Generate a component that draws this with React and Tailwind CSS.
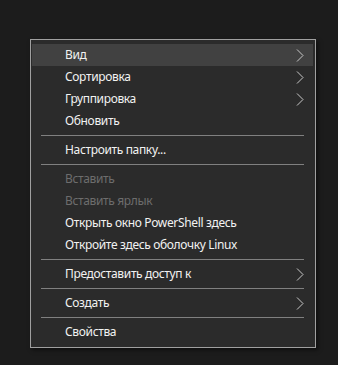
import React from 'react';

const items = [
    { label: 'Вид', sub: true, hover: true },
    { label: 'Сортировка', sub: true },
    { label: 'Группировка', sub: true },
    { label: 'Обновить' },
    'sep',
    { label: 'Настроить папку...' },
    'sep',
    { label: 'Вставить', disabled: true },
    { label: 'Вставить ярлык', disabled: true },
    { label: 'Открыть окно PowerShell здесь' },
    { label: 'Откройте здесь оболочку Linux' },
    'sep',
    { label: 'Предоставить доступ к', sub: true },
    'sep',
    { label: 'Создать', sub: true },
    'sep',
    { label: 'Свойства' },
];

const Chevron = () => (
    <svg width="8" height="13" viewBox="0 0 8 13" className="text-[#c8c8c8]">
        <path d="M1 0.5 L7 6.5 L1 12.5" fill="none" stroke="currentColor" strokeWidth="1" />
    </svg>
);

export default function App() {
    return (
        <div className="w-[338px] h-[365px] bg-[#1c1c1c] pt-[39px] pl-[30px]" style={{ fontFamily: '"Segoe UI", "Noto Sans", sans-serif' }}>
            <div className="w-[286px] border border-[#a0a0a0] bg-[#2b2b2b] py-[4px] pl-[1px] pr-[2px] shadow-[2px_2px_4px_rgba(0,0,0,0.5)]">
                {items.map((it, i) =>
                    it === 'sep' ? (
                        <div key={i} className="py-[3px] px-[9px]">
                            <div className="h-px bg-[#808080]" />
                        </div>
                    ) : (
                        <div
                            key={i}
                            className={`h-[22px] flex items-center justify-between pl-[33px] pr-[9px] text-[12px] tracking-[-0.35px] ${it.hover ? 'bg-[#414141]' : ''} ${it.disabled ? 'text-[#6d6d6d]' : 'text-[#f2f2f2]'}`}
                        >
                            <span className="leading-none">{it.label}</span>
                            {it.sub && <Chevron />}
                        </div>
                    )
                )}
            </div>
        </div>
    );
}
